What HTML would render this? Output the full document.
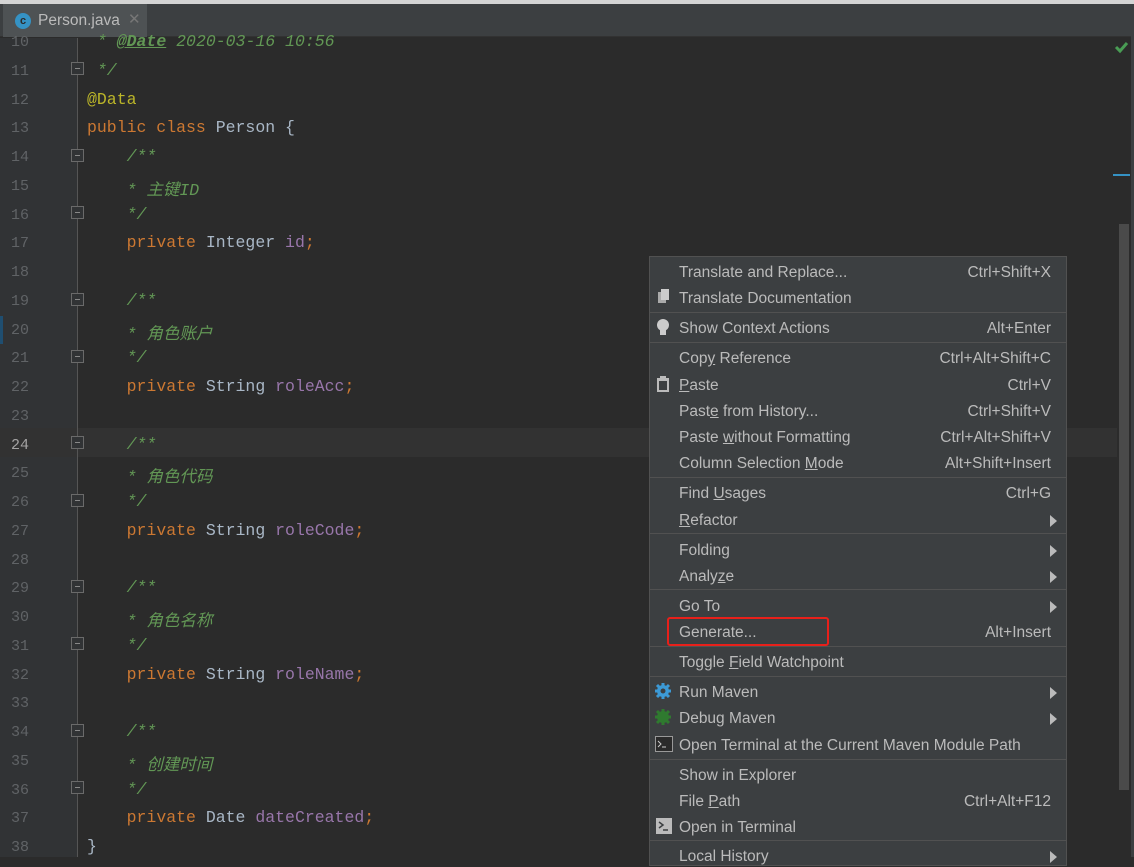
<!DOCTYPE html>
<html><head><meta charset="utf-8"><style>
*{margin:0;padding:0;box-sizing:border-box}
body{width:1134px;height:857px;overflow:hidden;background:#2b2b2b;position:relative;font-family:"Liberation Sans","Noto Sans CJK SC",sans-serif}
.top{position:absolute;left:0;top:0;width:1134px;height:4px;background:#d4d4d4}
.tabbar{position:absolute;left:0;top:4px;width:1134px;height:33px;background:#3c3f41;border-bottom:1px solid #323232}
.tab{position:absolute;left:3px;top:0;width:144px;height:33px;background:#4e5254}
.tab .ic{position:absolute;left:12px;top:9px;width:16px;height:16px;border-radius:50%;background:#3592c4;color:#2b2b2b;font-size:11px;font-weight:bold;text-align:center;line-height:16px}
.tab .t{position:absolute;left:35px;top:8px;font-size:15.5px;color:#bbbbbb}
.tab .x{position:absolute;left:125px;top:6px;font-size:15px;color:#777}
.gutter{position:absolute;left:0;top:38px;width:77px;height:819px;background:#313335}
.fold{position:absolute;left:77px;top:38px;width:1px;height:819px;background:#555}
.cur{position:absolute;left:0;top:428px;width:1117px;height:29px;background:#323232}
.ln{position:absolute;left:0;width:29px;text-align:right;font-family:"Liberation Mono",monospace;font-size:15px;color:#606366;margin-top:2px}
.code{position:absolute;left:87px;font-family:"Liberation Mono","Noto Sans CJK SC",monospace;font-size:16.5px;color:#a9b7c6;white-space:pre;margin-top:2px}
.k{color:#cc7832}.a{color:#bbb529}.c{color:#629755;font-style:italic}.f{color:#9876aa}
.fm{position:absolute;left:71px;width:13px;height:13px;border:1px solid #6a6a6a;background:#313335}
.fm:after{content:"";position:absolute;left:3px;top:5px;width:5px;height:1px;background:#888}
.menu{position:absolute;left:649px;top:256px;width:418px;height:610px;background:#3c3f41;border:1px solid #515151}
.i{position:absolute;left:29px;right:15px;height:20px;line-height:20px;font-size:15.5px;color:#bbbbbb;white-space:nowrap;margin-top:2px}
.i span{position:absolute;right:0;top:0}
.i .ar{right:-6px;width:0;height:0;border-left:7px solid #bbb;border-top:6px solid transparent;border-bottom:6px solid transparent;top:4px}
.sep{position:absolute;left:0;right:0;height:1px;background:#515151}
u{text-decoration:underline}
</style></head><body>
<div class="top"></div>
<div class="tabbar"><div class="tab"><div class="ic">c</div><div class="t">Person.java</div><div class="x">✕</div></div></div>
<div class="gutter"></div>
<div class="cur"></div>
<div class="fold"></div>
<div style="position:absolute;left:0;top:316px;width:3px;height:28px;background:#1f4e70"></div>

<div class="ln" style="top:32px">10</div>
<div class="ln" style="top:61px">11</div>
<div class="ln" style="top:90px">12</div>
<div class="ln" style="top:118px">13</div>
<div class="ln" style="top:147px">14</div>
<div class="ln" style="top:176px">15</div>
<div class="ln" style="top:205px">16</div>
<div class="ln" style="top:233px">17</div>
<div class="ln" style="top:262px">18</div>
<div class="ln" style="top:291px">19</div>
<div class="ln" style="top:320px">20</div>
<div class="ln" style="top:348px">21</div>
<div class="ln" style="top:377px">22</div>
<div class="ln" style="top:406px">23</div>
<div class="ln" style="top:435px;color:#a4a3a3">24</div>
<div class="ln" style="top:463px">25</div>
<div class="ln" style="top:492px">26</div>
<div class="ln" style="top:521px">27</div>
<div class="ln" style="top:550px">28</div>
<div class="ln" style="top:578px">29</div>
<div class="ln" style="top:607px">30</div>
<div class="ln" style="top:636px">31</div>
<div class="ln" style="top:665px">32</div>
<div class="ln" style="top:693px">33</div>
<div class="ln" style="top:722px">34</div>
<div class="ln" style="top:751px">35</div>
<div class="ln" style="top:780px">36</div>
<div class="ln" style="top:808px">37</div>
<div class="ln" style="top:837px">38</div>

<div class="fm" style="top:62px"></div>
<div class="fm" style="top:149px"></div>
<div class="fm" style="top:206px"></div>
<div class="fm" style="top:293px"></div>
<div class="fm" style="top:350px"></div>
<div class="fm" style="top:436px"></div>
<div class="fm" style="top:494px"></div>
<div class="fm" style="top:580px"></div>
<div class="fm" style="top:637px"></div>
<div class="fm" style="top:724px"></div>
<div class="fm" style="top:781px"></div>

<div class="code c" style="top:30px"> * <u style="font-weight:bold">@Date</u> 2020-03-16 10:56</div>
<div class="code c" style="top:59px"> */</div>
<div class="code a" style="top:88px">@Data</div>
<div class="code" style="top:116px"><span class="k">public class</span> Person {</div>
<div class="code c" style="top:145px">    /**</div>
<div class="code c" style="top:174px">    * 主键ID</div>
<div class="code c" style="top:203px">    */</div>
<div class="code" style="top:231px">    <span class="k">private</span> Integer <span class="f">id</span><span class="k">;</span></div>
<div class="code c" style="top:289px">    /**</div>
<div class="code c" style="top:318px">    * 角色账户</div>
<div class="code c" style="top:346px">    */</div>
<div class="code" style="top:375px">    <span class="k">private</span> String <span class="f">roleAcc</span><span class="k">;</span></div>
<div class="code c" style="top:433px">    /**</div>
<div class="code c" style="top:461px">    * 角色代码</div>
<div class="code c" style="top:490px">    */</div>
<div class="code" style="top:519px">    <span class="k">private</span> String <span class="f">roleCode</span><span class="k">;</span></div>
<div class="code c" style="top:576px">    /**</div>
<div class="code c" style="top:605px">    * 角色名称</div>
<div class="code c" style="top:634px">    */</div>
<div class="code" style="top:663px">    <span class="k">private</span> String <span class="f">roleName</span><span class="k">;</span></div>
<div class="code c" style="top:720px">    /**</div>
<div class="code c" style="top:749px">    * 创建时间</div>
<div class="code c" style="top:778px">    */</div>
<div class="code" style="top:806px">    <span class="k">private</span> Date <span class="f">dateCreated</span><span class="k">;</span></div>
<div class="code" style="top:835px">}</div>

<svg style="position:absolute;left:1114px;top:40px" width="16" height="14"><path d="M2 7 L6 11 L13 3" stroke="#499c54" stroke-width="3" fill="none"/></svg>
<div style="position:absolute;left:1113px;top:174px;width:17px;height:2px;background:#3592c4"></div>
<div style="position:absolute;left:1119px;top:224px;width:10px;height:566px;background:#4a4a4a"></div>
<div style="position:absolute;left:1131px;top:4px;width:3px;height:853px;background:#3c3f41"></div>

<div class="menu">
<div class="i" style="top:4px">Translate and Replace...<span>Ctrl+Shift+X</span></div>
<div class="i" style="top:30px">Translate Documentation</div>
<div class="sep" style="top:55px"></div>
<div class="i" style="top:60px">Show Context Actions<span>Alt+Enter</span></div>
<div class="sep" style="top:85px"></div>
<div class="i" style="top:90px">Cop<u>y</u> Reference<span>Ctrl+Alt+Shift+C</span></div>
<div class="i" style="top:117px"><u>P</u>aste<span>Ctrl+V</span></div>
<div class="i" style="top:143px">Past<u>e</u> from History...<span>Ctrl+Shift+V</span></div>
<div class="i" style="top:169px">Paste <u>w</u>ithout Formatting<span>Ctrl+Alt+Shift+V</span></div>
<div class="i" style="top:195px">Column Selection <u>M</u>ode<span>Alt+Shift+Insert</span></div>
<div class="sep" style="top:220px"></div>
<div class="i" style="top:225px">Find <u>U</u>sages<span>Ctrl+G</span></div>
<div class="i" style="top:252px"><u>R</u>efactor<span class="ar"></span></div>
<div class="sep" style="top:276px"></div>
<div class="i" style="top:282px">Folding<span class="ar"></span></div>
<div class="i" style="top:308px">Analy<u>z</u>e<span class="ar"></span></div>
<div class="sep" style="top:332px"></div>
<div class="i" style="top:338px">Go To<span class="ar"></span></div>
<div class="i" style="top:364px">Generate...<span>Alt+Insert</span></div>
<div class="sep" style="top:389px"></div>
<div class="i" style="top:394px">Toggle <u>F</u>ield Watchpoint</div>
<div class="sep" style="top:419px"></div>
<div class="i" style="top:424px">Run Maven<span class="ar"></span></div>
<div class="i" style="top:450px">Debug Maven<span class="ar"></span></div>
<div class="i" style="top:477px">Open Terminal at the Current Maven Module Path</div>
<div class="sep" style="top:502px"></div>
<div class="i" style="top:507px">Show in Explorer</div>
<div class="i" style="top:533px">File <u>P</u>ath<span>Ctrl+Alt+F12</span></div>
<div class="i" style="top:559px">Open in Terminal</div>
<div class="sep" style="top:583px"></div>
<div class="i" style="top:588px">Local History<span class="ar"></span></div>
<div style="position:absolute;left:17px;top:360px;width:162px;height:29px;border:2px solid #e8201a;border-radius:3px"></div>
<svg style="position:absolute;left:7px;top:32px" width="14" height="16"><rect x="1" y="3" width="8" height="11" fill="#aaa"/><rect x="4" y="0" width="8" height="11" fill="#ccc"/></svg>
<svg style="position:absolute;left:5px;top:61px" width="16" height="20"><circle cx="8" cy="7" r="6" fill="#ccc"/><rect x="5" y="12" width="6" height="5" fill="#ccc"/></svg>
<svg style="position:absolute;left:6px;top:118px" width="14" height="18"><rect x="1" y="3" width="12" height="14" fill="#bbb"/><rect x="4" y="1" width="6" height="4" fill="#bbb"/><rect x="3" y="6" width="8" height="9" fill="#3c3f41"/></svg>
<svg style="position:absolute;left:4px;top:425px" width="18" height="18"><circle cx="9" cy="9" r="6" fill="#3c9ad6"/><g stroke="#3c9ad6" stroke-width="3"><path d="M9 1V17M1 9H17M3 3L15 15M15 3L3 15"/></g><circle cx="9" cy="9" r="2.5" fill="#3c3f41"/></svg>
<svg style="position:absolute;left:4px;top:451px" width="18" height="18"><circle cx="9" cy="9" r="6" fill="#2f7a2f"/><g stroke="#2f7a2f" stroke-width="3"><path d="M9 1V17M1 9H17M3 3L15 15M15 3L3 15"/></g></svg>
<svg style="position:absolute;left:5px;top:479px" width="18" height="16"><rect x="0.5" y="0.5" width="17" height="15" fill="#2b2b2b" stroke="#999"/><path d="M3 5L6 8L3 11M7 11H11" stroke="#ccc" fill="none"/></svg>
<svg style="position:absolute;left:6px;top:561px" width="16" height="16"><rect width="16" height="16" fill="#bbb"/><path d="M3 4L7 7L3 10M7 12H12" stroke="#3c3f41" stroke-width="1.5" fill="none"/></svg>
</div>
</body></html>
